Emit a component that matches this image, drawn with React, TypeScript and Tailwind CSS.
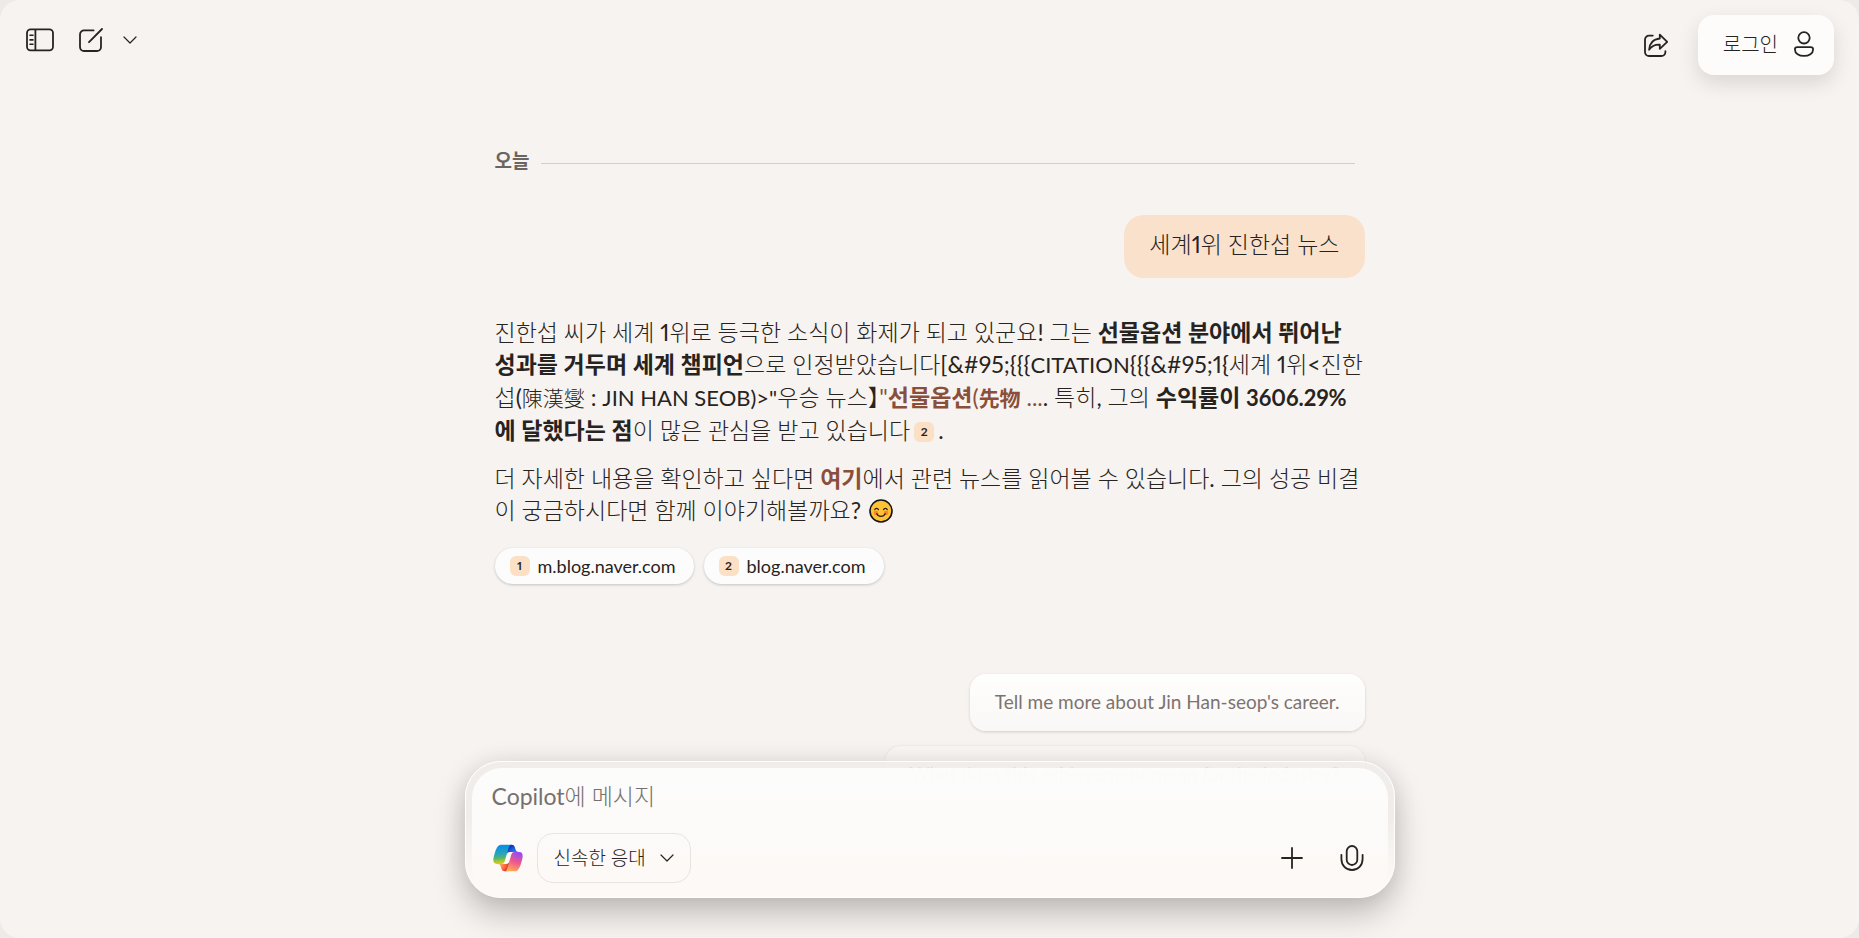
import type { ReactNode } from "react"

type IconProps = { className?: string }

function SidebarIcon({ className }: IconProps) {
  return (
    <svg viewBox="0 0 28 24" fill="none" stroke="currentColor" strokeWidth="1.8" className={className}>
      <rect x="1" y="1.4" width="26" height="21" rx="3.6" />
      <path d="M9.4 1.4v21" />
      <path d="M4 7.2h3M4 11.9h3M4 16.2h3" strokeLinecap="round" strokeWidth="1.6" />
    </svg>
  )
}

function ComposeIcon({ className }: IconProps) {
  return (
    <svg viewBox="0 0 24 24" fill="none" stroke="currentColor" strokeWidth="1.8" strokeLinecap="round" className={className}>
      <path d="M14.6 2.4H5A4 4 0 0 0 1 6.4V19a4 4 0 0 0 4 4h13a4 4 0 0 0 4-4V9.2" />
      <path d="M10 14.2 23 1" />
    </svg>
  )
}

function ChevronIcon({ className }: IconProps) {
  return (
    <svg viewBox="0 0 14 8" fill="none" stroke="currentColor" strokeWidth="1.2" strokeLinecap="round" strokeLinejoin="round" className={className}>
      <path d="m1 1 6 6 6-6" />
    </svg>
  )
}

function ShareIcon({ className }: IconProps) {
  return (
    <svg viewBox="0 0 24 24" fill="none" stroke="currentColor" strokeWidth="1.8" strokeLinecap="round" strokeLinejoin="round" className={className}>
      <path d="M8.8 2.6H5a4 4 0 0 0-4 4V19a4 4 0 0 0 4 4h12.4a4 4 0 0 0 4-4v-.8" />
      <path d="M15.8 1.6 23.2 8.8l-7.4 7v-4.1c-4.6-.2-8.3 1.3-10.7 5.1.3-6.3 4.3-10.8 10.7-11.3z" />
    </svg>
  )
}

function PersonIcon({ className }: IconProps) {
  return (
    <svg viewBox="0 0 20 26" fill="none" stroke="currentColor" strokeWidth="1.8" className={className}>
      <circle cx="10" cy="6.8" r="5.7" />
      <path d="M3.4 16.2h13.2c1.5 0 2.5 1 2.5 2.3 0 3.9-4.1 6.4-9.1 6.4s-9.1-2.5-9.1-6.4c0-1.3 1-2.3 2.5-2.3z" />
    </svg>
  )
}

function PlusIcon({ className }: IconProps) {
  return (
    <svg viewBox="0 0 22 22" fill="none" stroke="currentColor" strokeWidth="1.8" strokeLinecap="round" className={className}>
      <path d="M11 1v20M1 11h20" />
    </svg>
  )
}

function MicIcon({ className }: IconProps) {
  return (
    <svg viewBox="0 0 24 26" fill="none" stroke="currentColor" strokeWidth="1.8" strokeLinecap="round" className={className}>
      <rect x="6.7" y="1" width="10.6" height="19" rx="5.3" />
      <path d="M1.4 9.8V14c0 6.3 4.5 11 10.6 11s10.6-4.7 10.6-11V9.8" />
    </svg>
  )
}

function SmileIcon({ className }: IconProps) {
  return (
    <svg viewBox="0 0 24 24" fill="none" role="img" aria-label="😊" className={className}>
      <circle cx="12" cy="12" r="11" fill="#fdc235" stroke="#141414" strokeWidth="1.6" />
      <circle cx="7" cy="14" r="2.3" fill="#f5872e" />
      <circle cx="17" cy="14" r="2.3" fill="#f5872e" />
      <path d="M5.8 10.6c.6-1.7 3-1.7 3.6 0M14.6 10.6c.6-1.7 3-1.7 3.6 0M7.8 14.8c1.7 3.4 6.7 3.4 8.4 0" stroke="#2c1a10" strokeWidth="1.3" strokeLinecap="round" />
    </svg>
  )
}

function CopilotLogo({ className }: IconProps) {
  return (
    <svg viewBox="0 0 48 48" fill="none" className={className}>
      <defs>
        <radialGradient id="cpBlue" cx="0" cy="0" r="1" gradientUnits="userSpaceOnUse" gradientTransform="matrix(-10.96 -13.389 12.59 -10.306 38.005 20.514)">
          <stop offset=".096" stopColor="#00aeff" />
          <stop offset=".773" stopColor="#2253ce" />
          <stop offset="1" stopColor="#0736c4" />
        </radialGradient>
        <radialGradient id="cpWarm" cx="0" cy="0" r="1" gradientUnits="userSpaceOnUse" gradientTransform="matrix(9.877 12.573 -12.198 9.582 11.145 32.817)">
          <stop stopColor="#ffb657" />
          <stop offset=".634" stopColor="#ff5f3d" />
          <stop offset=".923" stopColor="#c02b3c" />
        </radialGradient>
        <linearGradient id="cpLeft" x1="14.5" y1="4" x2="16.8" y2="34" gradientUnits="userSpaceOnUse">
          <stop offset=".1" stopColor="#0d91e1" />
          <stop offset=".45" stopColor="#2aa4b8" />
          <stop offset=".66" stopColor="#52b471" />
          <stop offset=".84" stopColor="#b7c82a" />
          <stop offset="1" stopColor="#ffc800" />
        </linearGradient>
        <radialGradient id="cpRight" cx="0" cy="0" r="1" gradientUnits="userSpaceOnUse" gradientTransform="matrix(-12.67 36.239 -43.424 -15.182 41.32 12.813)">
          <stop offset=".066" stopColor="#8c48ff" />
          <stop offset=".5" stopColor="#f2598a" />
          <stop offset=".896" stopColor="#ffb152" />
        </radialGradient>
      </defs>
      <path fill="url(#cpBlue)" d="M34.142 7.325A4.63 4.63 0 0 0 29.7 4h-1.35a4.63 4.63 0 0 0-4.554 3.794L21.48 20.407l.575-1.965a4.63 4.63 0 0 1 4.444-3.33h7.853l3.294 1.282 3.175-1.283h-.926a4.63 4.63 0 0 1-4.443-3.325l-1.31-4.461z" />
      <path fill="url(#cpWarm)" d="M14.33 40.656A4.63 4.63 0 0 0 18.779 44h2.87a4.63 4.63 0 0 0 4.629-4.51l.312-12.163-.654 2.233a4.63 4.63 0 0 1-4.443 3.329h-7.919l-2.823-1.532-3.057 1.532h.912a4.63 4.63 0 0 1 4.447 3.344l1.279 4.423z" />
      <path fill="url(#cpLeft)" d="M29.5 4H13.46c-4.583 0-7.332 6.057-9.165 12.113C2.123 23.29-.72 32.885 7.503 32.885h6.925a4.63 4.63 0 0 0 4.456-3.358 2078.617 2078.617 0 0 1 4.971-17.156c.843-2.843 1.544-5.284 2.621-6.805C27.08 4.714 28.086 4 29.5 4z" />
      <path fill="url(#cpRight)" d="M18.498 44h16.04c4.582 0 7.332-6.058 9.165-12.115 2.171-7.177 5.013-16.775-3.208-16.775h-6.926a4.63 4.63 0 0 0-4.455 3.358 2084.036 2084.036 0 0 1-4.972 17.16c-.842 2.843-1.544 5.285-2.62 6.806-.604.852-1.61 1.566-3.024 1.566z" />
    </svg>
  )
}

function Bold({ children }: { children: ReactNode }) {
  return <strong className="font-['Lato','Noto_Sans_CJK_KR',sans-serif] font-bold">{children}</strong>
}

// latin capitals and figures look large beside hangul, so they go one step down
function Latin({ children }: { children: ReactNode }) {
  return <span className="text-[22px]">{children}</span>
}

// hanja are full width, so they are set a little smaller than the hangul
function Hanja({ children }: { children: ReactNode }) {
  return <span className="text-[21px]">{children}</span>
}

function CiteLink({ children }: { children: ReactNode }) {
  return (
    <a href="#source" className="text-[#8a4f3a]">
      {children}
    </a>
  )
}

const sources = ["m.blog.naver.com", "blog.naver.com"]

function Header() {
  return (
    <header className="flex items-start justify-between pt-[15px] pr-[25px] pl-6">
      <div className="flex items-center pt-[13px]">
        <button aria-label="사이드바 열기" className="px-0.5">
          <SidebarIcon className="h-6 w-7" />
        </button>
        <button aria-label="새 채팅" className="ml-[23px]">
          <ComposeIcon className="h-6 w-6" />
        </button>
        <button aria-label="채팅 메뉴" className="ml-5">
          <ChevronIcon className="h-2 w-3.5" />
        </button>
      </div>
      <div className="flex items-center gap-[30px]">
        <button aria-label="공유">
          <ShareIcon className="h-6 w-6" />
        </button>
        <button className="flex h-[60px] items-center gap-4 rounded-2xl bg-[#fdfcfb] pr-5 pb-0.5 pl-[25px] text-xl shadow-[0_8px_20px_rgba(0,0,0,0.12)]">
          로그인
          <PersonIcon className="h-[26px] w-5" />
        </button>
      </div>
    </header>
  )
}

function Answer() {
  return (
    <article className="mt-[38px] text-[23px] leading-8">
      <p>
        진한섭 씨가 세계 1위로 등극한 소식이 화제가 되고 있군요! 그는{" "}
        <Bold>선물옵션 분야에서 뛰어난 성과를 거두며 세계 챔피언</Bold>으로 인정받았습니다[&amp;#95;{"{{{"}
        <Latin>CITATION</Latin>
        {"{{{"}&amp;#95;1{"{"}세계 1위&lt;진한섭(<Hanja>陳漢燮</Hanja> : <Latin>JIN HAN SEOB)&gt;"</Latin>우승 뉴스
        <span className="[font-feature-settings:'halt']">】</span>
        <CiteLink>
          "<Bold>선물옵션</Bold>(<Bold><Hanja>先物</Hanja></Bold> ...
        </CiteLink>
        . 특히, 그의 <Bold>수익률이 <Latin>3606.29%</Latin>에 달했다는 점</Bold>이 많은 관심을 받고 있습니다
        <a href="#source" className="mx-1 inline-block h-5 w-5 rounded-md bg-[#fce0c6] text-center align-[3px] text-xs leading-5 font-bold">
          2
        </a>
        .
      </p>
      <p className="mt-4">
        더 자세한 내용을 확인하고 싶다면{" "}
        <CiteLink>
          <Bold>여기</Bold>
        </CiteLink>
        에서 관련 뉴스를 읽어볼 수 있습니다. 그의 성공 비결이 궁금하시다면 함께 이야기해볼까요?{" "}
        <SmileIcon className="ml-0.5 inline-block h-6 w-6 align-[-4px]" />
      </p>
    </article>
  )
}

function Composer() {
  return (
    <form className="mx-auto w-full max-w-[930px] rounded-[36px] border border-white bg-linear-to-b from-[#efebe8]/80 from-40% to-[#fcf9f7] to-90% px-1.5 pt-1.5 shadow-[0_16px_32px_rgba(0,0,0,0.22),0_0_24px_rgba(0,0,0,0.08)]">
      <div className="rounded-[30px] bg-linear-to-b from-[#fefefe]/90 to-[#fcf9f7] to-80% px-5 pt-2.5 pb-3.5">
        <textarea
          rows={1}
          aria-label="Copilot에 메시지"
          placeholder="Copilot에 메시지"
          className="block h-9 w-full resize-none bg-transparent text-[23px] leading-9 outline-none placeholder:text-[#75706d]"
        />
        <div className="mt-[19px] flex items-center">
          <CopilotLogo className="h-8 w-8 shrink-0" />
          <button type="button" className="ml-[13px] flex h-[50px] items-center gap-3.5 rounded-2xl border border-[#e8e4e1] px-4 text-[19px]">
            신속한 응대
            <ChevronIcon className="h-2 w-3.5" />
          </button>
          <button type="button" aria-label="추가" className="ml-auto">
            <PlusIcon className="h-[22px] w-[22px]" />
          </button>
          <button type="button" aria-label="음성" className="mr-1 ml-[37px]">
            <MicIcon className="h-[26px] w-6" />
          </button>
        </div>
      </div>
    </form>
  )
}

export default function App() {
  return (
    <div className="bg-[#eeeae7]">
      <div className="relative flex h-screen flex-col overflow-hidden rounded-[20px] bg-[#f7f3f0] font-['Lato','Noto_Sans_CJK_KR_Light','Noto_Sans_CJK_KR',sans-serif] text-[#272320] proportional-nums">
        <Header />
        <main className="mx-auto w-full max-w-[870px]">
          <div className="mt-[70px] flex items-center gap-3 pr-2.5">
            <h2 className="text-[19px] leading-8 text-[#6b6561]">
              <Bold>오늘</Bold>
            </h2>
            <hr className="mt-1 grow border-[#d8ccc5]" />
          </div>
          <p className="mt-[38px] ml-auto w-fit rounded-[20px] bg-[#fae1cc] px-[25px] pt-[13px] pb-[18px] text-[23px] leading-8">
            세계1위 진한섭 뉴스
          </p>
          <Answer />
          <ul className="mt-[22px] flex gap-2.5">
            {sources.map((host, i) => (
              <li key={host}>
                <a
                  href={`https://${host}`}
                  className="flex h-9 items-center gap-2 rounded-full bg-[#fdfcfc] pr-[18px] pl-[15px] text-lg shadow-[0_1px_3px_rgba(0,0,0,0.2)]"
                >
                  <span className="h-5 w-5 rounded-md bg-[#fce0c6] text-center text-xs leading-5 font-bold">{i + 1}</span>
                  {host}
                </a>
              </li>
            ))}
          </ul>
          <div className="mt-[90px] flex flex-col items-end gap-[15px]">
            <button className="h-[57px] rounded-2xl bg-linear-to-b from-[#fefefd] to-[#faf8f6] px-[25px] text-[19px] text-[#7c7370] shadow-[0_1px_3px_rgba(0,0,0,0.16)]">
              Tell me more about Jin Han-seop's career.
            </button>
            <button className="h-[57px] rounded-2xl bg-[#f9f6f4] px-[25px] text-[19px] text-[#aaa19c] shadow-[0_0_3px_rgba(0,0,0,0.08)]">
              What does this achievement mean for the industry?
            </button>
          </div>
        </main>
        {/* composer floats above the end of the conversation */}
        <div className="absolute inset-x-0 bottom-10">
          <Composer />
        </div>
      </div>
    </div>
  )
}
